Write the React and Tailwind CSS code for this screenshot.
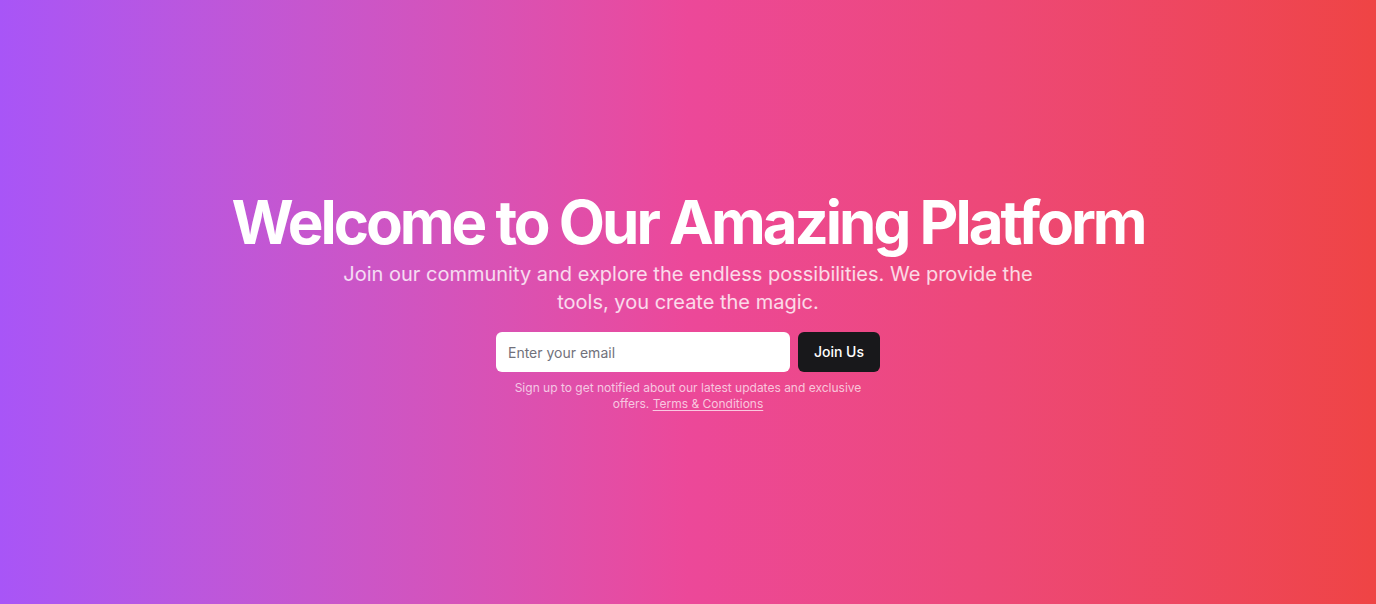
export default function App() {
  return (
    <main
      className="flex h-[604px] w-full items-center justify-center bg-gradient-to-r from-[#a855f7] via-[#ec4899] to-[#ef4444] px-4"
      style={{ fontFamily: "Inter, 'Noto Sans', sans-serif" }}
    >
      <section className="flex flex-col items-center space-y-4 text-center">
        <div className="flex flex-col items-center space-y-2">
          <h1 className="text-6xl/none font-bold tracking-tighter text-white">
            Welcome to Our Amazing Platform
          </h1>
          <p className="mx-auto max-w-[700px] text-xl text-white/80">
            Join our community and explore the endless possibilities. We provide the tools, you
            create the magic.
          </p>
        </div>

        <div className="w-full max-w-sm space-y-2">
          <form className="flex space-x-2" onSubmit={(e) => e.preventDefault()}>
            <input
              type="email"
              placeholder="Enter your email"
              className="h-10 flex-1 rounded-md bg-white px-3 py-2 text-sm text-zinc-900 outline-none placeholder:text-zinc-500"
            />
            <button
              type="submit"
              className="h-10 rounded-md bg-[#18181b] px-4 text-sm font-medium text-white"
            >
              Join Us
            </button>
          </form>
          <p className="text-xs text-white/70">
            Sign up to get notified about our latest updates and exclusive offers.{" "}
            <a className="underline underline-offset-2" href="#">
              Terms &amp; Conditions
            </a>
          </p>
        </div>
      </section>
    </main>
  );
}
